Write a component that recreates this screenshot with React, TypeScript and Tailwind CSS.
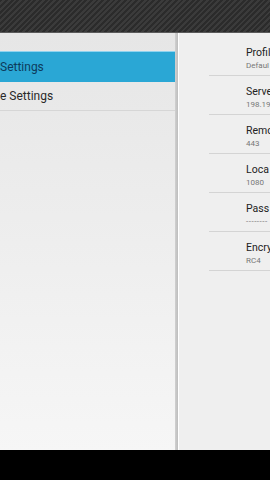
import React from "react";

const items = [
  { label: "Profil", value: "Defaul" },
  { label: "Serve", value: "198.19" },
  { label: "Remo", value: "443" },
  { label: "Loca", value: "1080" },
  { label: "Pass", value: "--------" },
  { label: "Encry", value: "RC4" },
];

export default function App() {
  return (
    <div
      className="flex h-[480px] w-[270px] flex-col overflow-hidden bg-black"
      style={{ fontFamily: "Roboto, 'Noto Sans', sans-serif" }}
    >
      {/* status / action bar */}
      <div className="h-[33px] shrink-0 border-b border-[#5a5a5a] bg-[repeating-linear-gradient(135deg,#2b2b2b_0px,#2b2b2b_2px,#3b3b3b_2px,#3b3b3b_4px)]" />

      <div className="flex h-[417px] shrink-0">
        {/* left: headers */}
        <div className="w-[175px] shrink-0 bg-gradient-to-b from-[#e6e6e6] to-[#f6f6f6] pt-[18px]">
          <div className="flex h-[31px] items-center whitespace-nowrap border-t border-[#8fd3ef] bg-[#2aa7d5] text-[12px] text-[#0d3b5c]">
            Settings
          </div>
          <div className="flex h-[29px] items-center whitespace-nowrap border-b border-[#d6d6d6] text-[12px] text-[#2a2a2a]">
            e Settings
          </div>
        </div>

        {/* divider shadow */}
        <div className="w-[3px] shrink-0 bg-gradient-to-r from-[#d0d0d0] to-[#bdbdbd]" />

        {/* right: preferences */}
        <div className="flex-1 border-l border-white bg-[#efefef] pt-[4px]">
          {items.map((it) => (
            <div key={it.label} className="ml-[30px] h-[39px] whitespace-nowrap border-b border-[#d4d4d4] pl-[37px] pt-[9px]">
              <div className="text-[10.5px] leading-[14px] text-[#222]">{it.label}</div>
              <div className={`text-[8px] leading-[12px] text-[#777] ${it.label === "Pass" ? "tracking-[0.5px]" : ""}`}>
                {it.value}
              </div>
            </div>
          ))}
        </div>
      </div>
    </div>
  );
}
